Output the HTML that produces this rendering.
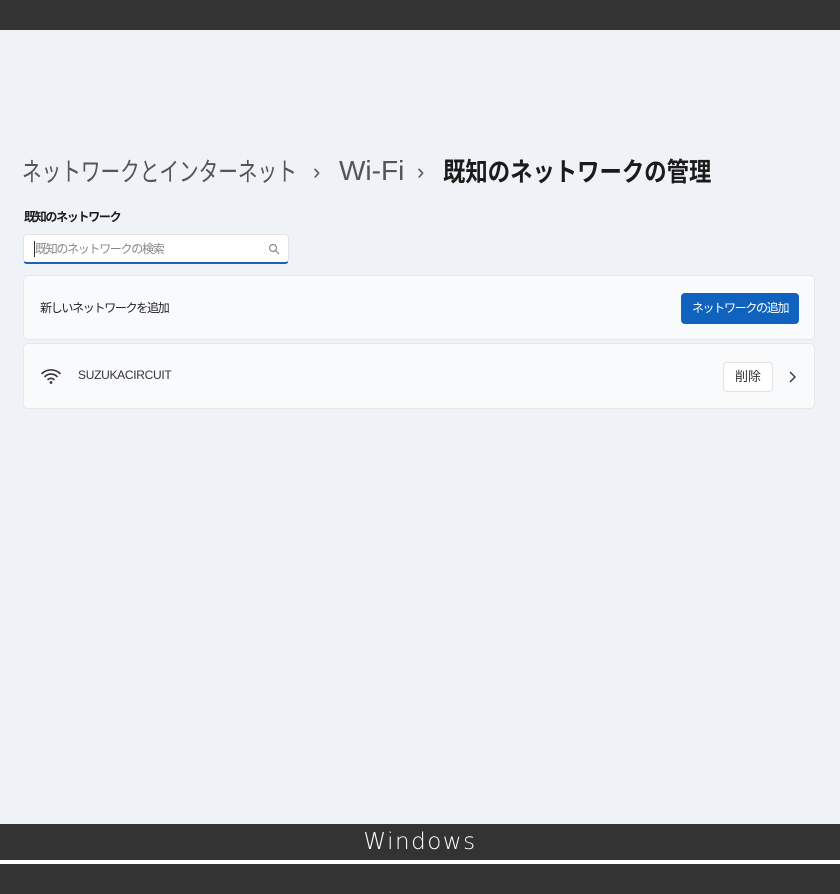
<!DOCTYPE html>
<html><head><meta charset="utf-8"><style>
*{margin:0;padding:0;box-sizing:border-box}
body{width:840px;height:894px;background:#eff3f8;font-family:"Liberation Sans","Noto Sans CJK JP",sans-serif;position:relative;overflow:hidden;color:#1b1b1b}
.top{position:absolute;left:0;top:0;width:840px;height:30px;background:#333}
.bar{position:absolute;left:0;top:824px;width:840px;height:36px;background:#333;color:#fff;text-align:center;font-size:23px;line-height:36px;letter-spacing:1.5px;font-family:"DejaVu Sans","Liberation Sans",sans-serif;font-weight:300}
.white{position:absolute;left:0;top:860px;width:840px;height:4px;background:#fff}
.bot{position:absolute;left:0;top:864px;width:840px;height:30px;background:#333}
.h{position:absolute;top:154px;font-size:26px;line-height:36px;white-space:nowrap;color:#555;transform-origin:0 0}
.j{font-size:12px;letter-spacing:-1.3px;white-space:nowrap}
.lbl{position:absolute;left:24px;top:208px;font-weight:bold}
.search{position:absolute;left:23px;top:234px;width:266px;height:30px;background:#fff;border:1px solid #e3e3e3;border-bottom:2px solid #1a64b6;border-radius:4px;color:#888;padding:5px 11px;line-height:18px}
.search:before{content:"";position:absolute;left:10px;top:6px;width:1px;height:16px;background:#333}
.card{position:absolute;left:23px;width:792px;background:#f9fafc;border:1px solid #e6e8ec;border-radius:5px}
.c1{top:275px;height:65px}
.c2{top:343px;height:66px}
.t{position:absolute;color:#222}
.btn{position:absolute;left:657px;top:17px;width:118px;height:31px;background:#0f62bd;color:#fff;border-radius:4px;text-align:center;line-height:30px}
.del{position:absolute;left:699px;top:18px;width:50px;height:30px;background:#fff;border:1px solid #e2e2e2;border-radius:4px;text-align:center;line-height:28px;color:#333;letter-spacing:0;font-size:13px}
</style></head><body>
<div class="top"></div>
<div class="h" style="left:22px;transform:scaleX(0.755)">ネットワークとインターネット</div>
<div class="h" style="left:313px;font-size:22px">›</div>
<div class="h" style="left:339px;font-size:28px;top:153px">Wi-Fi</div>
<div class="h" style="left:417px;font-size:22px">›</div>
<div class="h" style="left:443px;font-weight:bold;color:#1b1b1b;transform:scaleX(0.86)">既知のネットワークの管理</div>
<div class="lbl j">既知のネットワーク</div>
<div class="search j">既知のネットワークの検索
<svg style="position:absolute;right:8px;top:8px" width="12" height="12" viewBox="0 0 12 12"><circle cx="5" cy="5" r="3.5" fill="none" stroke="#888" stroke-width="1.2"/><path d="M7.5 7.5L11 11" stroke="#888" stroke-width="1.2"/></svg></div>
<div class="card c1"><div class="t j" style="left:16px;top:23px">新しいネットワークを追加</div><div class="btn j">ネットワークの追加</div></div>
<div class="card c2">
<svg style="position:absolute;left:16px;top:23px" width="22" height="18" viewBox="0 0 22 18"><path d="M2 6.5a13 13 0 0 1 18 0M5 9.5a8.5 8.5 0 0 1 12 0M8 12.5a4.3 4.3 0 0 1 6 0" fill="none" stroke="#333" stroke-width="1.6" stroke-linecap="round"/><circle cx="11" cy="15.5" r="1.4" fill="#333"/></svg>
<div class="t j" style="left:54px;top:24px;color:#333;letter-spacing:-0.3px">SUZUKACIRCUIT</div>
<div class="del">削除</div>
<svg style="position:absolute;left:763px;top:26px" width="10" height="14" viewBox="0 0 10 14"><path d="M3 2l5 5-5 5" fill="none" stroke="#333" stroke-width="1.4"/></svg>
</div>
<div class="bar">Windows</div>
<div class="white"></div>
<div class="bot"></div>
</body></html>
